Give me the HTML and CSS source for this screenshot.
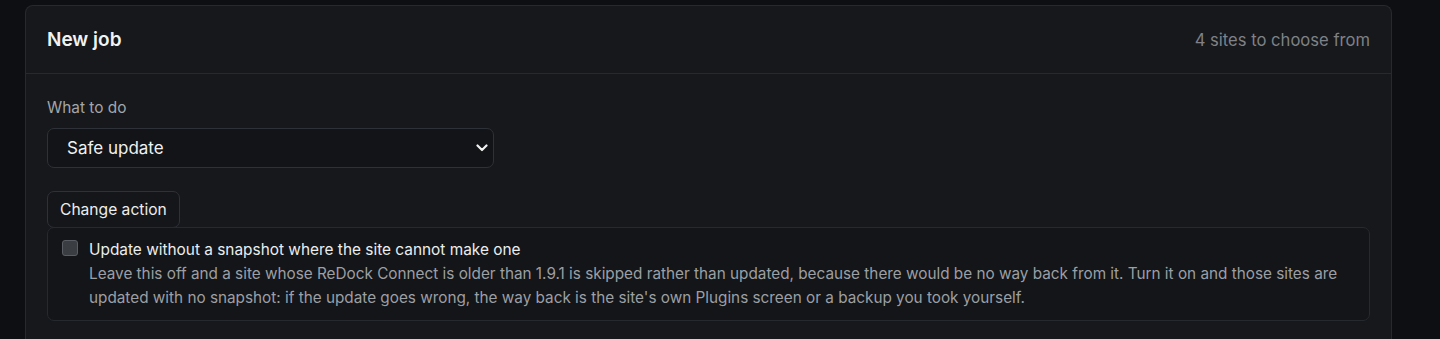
FILE: index.html
```html
<!DOCTYPE html>
<html lang="en">
<head>
    <meta charset="UTF-8">
    <meta name="viewport" content="width=device-width, initial-scale=1.0">
    <title>New job</title>
    <link rel="stylesheet" href="styles.css">
</head>
<body>
    <div class="page">
        <section class="card">
            <header class="card-header">
                <h2>New job</h2>
                <span class="muted">4 sites to choose from</span>
            </header>
            <div class="card-body">
                <label class="field-label" for="action">What to do</label>
                <div class="select-wrap">
                    <select id="action">
                        <option>Safe update</option>
                        <option>Update</option>
                        <option>Snapshot only</option>
                    </select>
                    <svg class="chevron" width="12" height="8" viewBox="0 0 12 8" aria-hidden="true">
                        <path d="M1.5 1.5 L6 6 L10.5 1.5" fill="none" stroke="#f2f2f3" stroke-width="2.2" stroke-linecap="round" stroke-linejoin="round"/>
                    </svg>
                </div>
                <button class="btn">Change action</button>
                <label class="option">
                    <input type="checkbox">
                    <span class="option-text">
                        <span class="option-title">Update without a snapshot where the site cannot make one</span>
                        <span class="option-desc">Leave this off and a site whose ReDock Connect is older than 1.9.1 is skipped rather than updated, because there would be no way back from it. Turn it on and those sites are updated with no snapshot: if the update goes wrong, the way back is the site's own Plugins screen or a backup you took yourself.</span>
                    </span>
                </label>
            </div>
        </section>
    </div>
</body>
</html>
```

FILE: styles.css
```css
/* General styles */
body {
    margin: 0;
    background-color: #0e0f12;
    color: #e9eaec;
    font-family: Inter, "Noto Sans", sans-serif;
    font-size: 15px;
}

.page {
    padding: 5px 48px 0 25px;
}

.card {
    background: #16181b;
    border: 1px solid #26292e;
    border-bottom: none;
    border-radius: 8px 8px 0 0;
    min-height: 340px;
}

.card-header {
    display: flex;
    justify-content: space-between;
    align-items: center;
    height: 67px;
    padding: 0 21px;
    border-bottom: 1px solid #26292e;
}

.card-header h2 {
    margin: 0;
    font-size: 19px;
    font-weight: 600;
    color: #f1f2f3;
}

.muted {
    color: #7e8187;
    font-size: 16.6px;
}

.card-body {
    display: flex;
    flex-direction: column;
    align-items: flex-start;
    padding: 24px 21px 0;
}

.field-label {
    color: #a3a6ab;
    font-size: 15.4px;
    line-height: 20px;
}

.select-wrap {
    position: relative;
    margin-top: 10px;
}

select {
    appearance: none;
    -webkit-appearance: none;
    width: 447px;
    height: 40px;
    padding: 0 40px 0 19px;
    background: #121417;
    color: #f0f1f2;
    border: 1px solid #2e3137;
    border-radius: 7px;
    font-family: inherit;
    font-size: 17px;
}

.chevron {
    position: absolute;
    right: 6px;
    top: 16px;
    pointer-events: none;
}

.btn {
    margin-top: 23px;
    height: 37px;
    padding: 0 12px;
    background: #141619;
    color: #eceded;
    border: 1px solid #2e3137;
    border-radius: 7px;
    font-family: inherit;
    font-size: 15.6px;
}

.option {
    display: flex;
    align-items: flex-start;
    gap: 11px;
    align-self: stretch;
    margin-top: -1px;
    padding: 10px 14px 10px;
    background: #131518;
    border: 1px solid #26292e;
    border-radius: 7px;
}

.option input[type="checkbox"] {
    appearance: none;
    -webkit-appearance: none;
    flex: none;
    width: 16px;
    height: 16px;
    margin: 2px 0 0;
    background: #3a3d42;
    border: 1px solid #5a5d63;
    border-radius: 3px;
}

.option-text {
    display: flex;
    flex-direction: column;
    line-height: 24px;
}

.option-title {
    color: #eceded;
    font-size: 15.4px;
}

.option-desc {
    color: #9c9fa4;
    font-size: 15.3px;
}
```
